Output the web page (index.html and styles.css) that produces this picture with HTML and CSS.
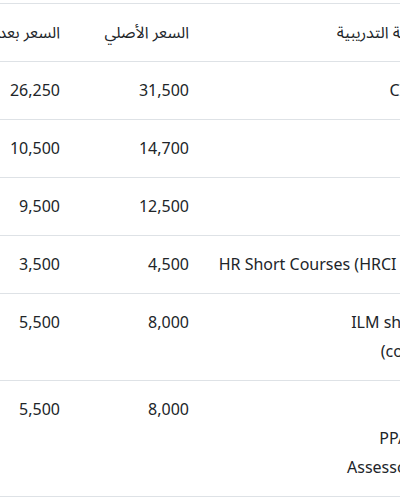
FILE: index.html
```html
<!DOCTYPE html>
<html lang="ar">
<head>
<meta charset="utf-8">
<link rel="stylesheet" href="styles.css">
</head>
<body>
<div class="viewport">
  <table class="prices">
    <colgroup>
      <col class="col-name">
      <col class="col-orig">
      <col class="col-disc">
    </colgroup>
    <thead>
      <tr>
        <th>عنوان الحقيبة التدريبية</th>
        <th>السعر الأصلي</th>
        <th>السعر بعد الخصم</th>
      </tr>
    </thead>
    <tbody>
      <tr>
        <td>CIPD Level3</td>
        <td>31,500</td>
        <td>26,250</td>
      </tr>
      <tr>
        <td>PHRi</td>
        <td>14,700</td>
        <td>10,500</td>
      </tr>
      <tr>
        <td>aPHRi</td>
        <td>12,500</td>
        <td>9,500</td>
      </tr>
      <tr>
        <td>HR Short Courses (HRCI Approved)</td>
        <td>4,500</td>
        <td>3,500</td>
      </tr>
      <tr>
        <td>ILM short course<br>(coursework)</td>
        <td>8,000</td>
        <td>5,500</td>
      </tr>
      <tr>
        <td>TAQA<br>PPA Program<br>Assessor Courses</td>
        <td>8,000</td>
        <td>5,500</td>
      </tr>
    </tbody>
  </table>
</div>
</body>
</html>
```
FILE: styles.css
```css
html, body {
  margin: 0;
  padding: 0;
  background: #ffffff;
}
.viewport {
  width: 400px;
  height: 500px;
  overflow: hidden;
  direction: ltr;
  padding-top: 3px;
  box-sizing: border-box;
}
.prices {
  direction: rtl;
  border-collapse: collapse;
  table-layout: fixed;
  width: 558px;
  margin-left: -64px;
  font-family: "Noto Sans", "Noto Sans Arabic", "DejaVu Sans", sans-serif;
  font-size: 16px;
  line-height: 29px;
  color: #212529;
}
.col-name { width: 289px; }
.col-orig { width: 129px; }
.col-disc { width: 140px; }
.prices th,
.prices td {
  text-align: right;
  vertical-align: top;
  padding: 14px 16px;
  border-top: 1px solid #dee2e6;
  font-weight: 400;
  white-space: nowrap;
}
.prices tbody tr:last-child td {
  border-bottom: 1px solid #dee2e6;
}
```
